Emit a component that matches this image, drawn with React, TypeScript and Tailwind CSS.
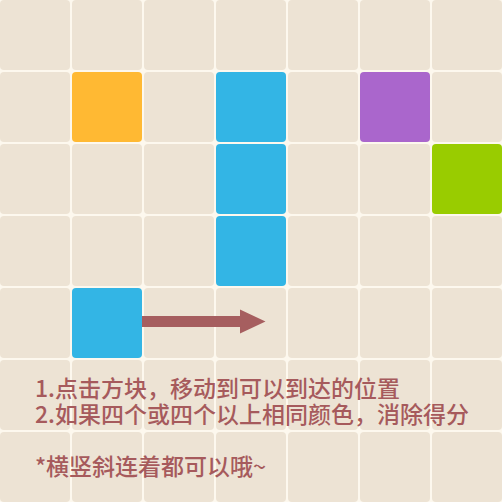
import React from "react";

const colors: Record<string, string> = {
  y: "bg-[#ffb933]",
  b: "bg-[#33b5e5]",
  p: "bg-[#aa66cc]",
  g: "bg-[#99cc00]",
};

const board = [
  "0000000",
  "0y0b0p0",
  "000b00g",
  "000b000",
  "0b00000",
  "0000000",
  "0000000",
];

function Line({ prefix, pw, cjk, suffix }: { prefix: string; pw: string; cjk: string; suffix?: string }) {
  return (
    <div className="flex items-baseline h-[26px]">
      <span className={pw}>{prefix}</span>
      {Array.from(cjk).map((ch, i) => (
        <span key={i} className="inline-block w-[23px] text-center">
          {ch}
        </span>
      ))}
      {suffix ? <span>{suffix}</span> : null}
    </div>
  );
}

export default function App() {
  return (
    <div className="relative w-[502px] h-[502px] bg-[#fdf8ee] overflow-hidden">
      <div className="grid grid-cols-[repeat(7,70px)] grid-rows-[repeat(7,70px)] gap-[2px]">
        {board.flatMap((row, r) =>
          row.split("").map((c, ci) => (
            <div
              key={`${r}-${ci}`}
              className={`rounded-[4px] ${c === "0" ? "bg-[#ede3d4]" : colors[c]}`}
            />
          ))
        )}
      </div>
      <svg className="absolute left-0 top-0" width="502" height="502">
        <path d="M142 316 H240 V309.5 L265.5 321.5 L240 333.5 V327 H142 Z" fill="#a65e5f" />
      </svg>
      <div
        className="absolute left-[35px] top-[374px] text-[23px] leading-[26px] font-medium text-[#a65a5c]"
        style={{ fontFamily: '"Noto Sans CJK SC", sans-serif' }}
      >
        <Line prefix="1." pw="w-[20px]" cjk="点击方块，移动到可以到达的位置" />
        <Line prefix="2." pw="w-[20px]" cjk="如果四个或四个以上相同颜色，消除得分" />
        <div className="h-[26px]" />
        <Line prefix="*" pw="w-[11px]" cjk="横竖斜连着都可以哦" suffix="~" />
      </div>
    </div>
  );
}
